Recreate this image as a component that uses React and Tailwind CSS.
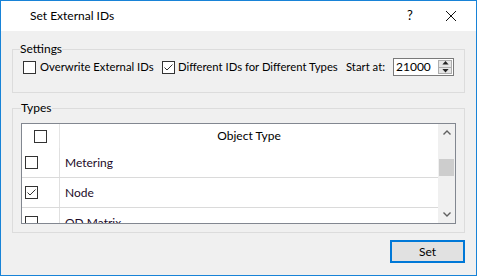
import React, { useState } from 'react';

const font = { fontFamily: '"Segoe UI", Lato, "Noto Sans", sans-serif' };

const CheckBox = ({ checked }) => (
    <span className="w-[13px] h-[13px] border border-[#333333] bg-white flex items-center justify-center shrink-0">
        {checked && (
            <svg width="11" height="11" viewBox="0 0 11 11">
                <path d="M1.5 5.5 L4 8 L9.5 2.5" fill="none" stroke="#333333" strokeWidth="1" />
            </svg>
        )}
    </span>
);

const rows = [
    { name: 'Metering', checked: false },
    { name: 'Node', checked: true },
    { name: 'OD Matrix', checked: false },
];

const App = () => {
    const [startAt] = useState('21000');

    return (
        <div className="w-[477px] h-[276px] border border-[#1883d7] flex flex-col text-[12px] text-[#000000] whitespace-nowrap overflow-hidden" style={font}>
            {/* Title bar */}
            <div className="h-[30px] bg-white flex items-center shrink-0">
                <span className="ml-[29px] flex-1">Set External IDs</span>
                <span className="w-[20px] text-center mr-[25px] text-[13px]">?</span>
                <svg width="12" height="12" viewBox="0 0 12 12" className="mr-[19px]">
                    <path d="M1 1 L11 11 M11 1 L1 11" stroke="#111111" strokeWidth="1" />
                </svg>
            </div>

            {/* Body */}
            <div className="flex-1 bg-[#f0f0f0] px-[11px] pt-[10px] flex flex-col">
                {/* Settings */}
                <fieldset className="border border-[#dcdcdc] px-[7px] h-[52px]">
                    <legend className="px-0 leading-[16px]">Settings</legend>
                    <div className="flex items-center mt-[1px] pl-[3px] h-[18px] text-[11.3px]">
                        <CheckBox />
                        <span className="ml-[4px] w-[122px]">Overwrite External IDs</span>
                        <CheckBox checked />
                        <span className="ml-[3px] w-[168px]">Different IDs for Different Types</span>
                        <span className="w-[47px]">Start at:</span>
                        <div className="w-[61px] h-[18px] border border-[#7a7a7a] bg-white flex items-stretch shrink-0">
                            <span className="flex-1 pl-[2px] leading-[16px] text-[12px]">{startAt}</span>
                            <div className="w-[14px] my-[1px] mr-[1px] border border-[#adadad] bg-[#e5e5e5] flex flex-col items-center justify-center gap-[2px]">
                                <svg width="7" height="4" viewBox="0 0 7 4"><path d="M0 4 L3.5 0 L7 4 Z" fill="#222" /></svg>
                                <div className="w-full h-px bg-[#adadad]" />
                                <svg width="7" height="4" viewBox="0 0 7 4"><path d="M0 0 L3.5 4 L7 0 Z" fill="#222" /></svg>
                            </div>
                        </div>
                    </div>
                </fieldset>

                {/* Types */}
                <fieldset className="mt-[7px] border border-[#dcdcdc] px-[8px] h-[133px]">
                    <legend className="px-0 leading-[16px]">Types</legend>
                    <div className="mt-[7px] h-[101px] border border-[#828790] bg-white flex overflow-hidden">
                        <div className="flex-1 flex flex-col overflow-hidden">
                            {/* Header */}
                            <div className="h-[24px] flex shrink-0">
                                <div className="w-[38px] border-r border-[#e5e5e5] flex items-center justify-center pt-[1px]">
                                    <CheckBox />
                                </div>
                                <div className="flex-1 flex items-center justify-center">Object Type</div>
                            </div>
                            {rows.map((row) => (
                                <div key={row.name} className="h-[30px] flex shrink-0 border-b border-[#dadada]">
                                    <div className="w-[38px] border-r border-[#e0e0e0] flex items-center pl-[3px]">
                                        <CheckBox checked={row.checked} />
                                    </div>
                                    <div className="flex-1 flex items-center pl-[5px] text-[#1c0a28]">{row.name}</div>
                                </div>
                            ))}
                        </div>
                        {/* Scrollbar */}
                        <div className="w-[17px] bg-[#f0f0f0] flex flex-col items-center">
                            <div className="h-[17px] flex items-center justify-center">
                                <svg width="8" height="5" viewBox="0 0 8 5"><path d="M0.5 4.5 L4 1 L7.5 4.5" fill="none" stroke="#606060" strokeWidth="1.4" /></svg>
                            </div>
                            <div className="mt-[18px] w-[15px] h-[17px] bg-[#cdcdcd]" />
                            <div className="flex-1" />
                            <div className="h-[17px] flex items-center justify-center">
                                <svg width="8" height="5" viewBox="0 0 8 5"><path d="M0.5 0.5 L4 4 L7.5 0.5" fill="none" stroke="#606060" strokeWidth="1.4" /></svg>
                            </div>
                        </div>
                    </div>
                </fieldset>

                {/* Buttons */}
                <div className="flex justify-end mt-[7px]">
                    <button className="w-[75px] h-[23px] border-2 border-[#0078d7] bg-[#e1e1e1] flex items-center justify-center">
                        Set
                    </button>
                </div>
            </div>
        </div>
    );
};

export default App;
